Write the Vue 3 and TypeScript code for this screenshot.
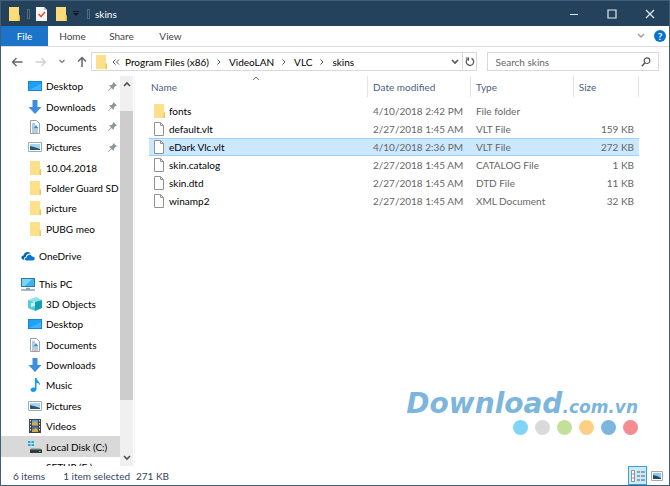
<script setup lang="ts">
import { ref } from 'vue'

interface NavItem {
  label: string
  icon: string
  root?: boolean
  pinned?: boolean
  active?: boolean
  gap?: boolean
}

interface FileRow {
  name: string
  date: string
  type: string
  size: string
  folder?: boolean
}

const navItems: NavItem[] = [
  { label: 'Desktop', icon: 'desktop', pinned: true },
  { label: 'Downloads', icon: 'download', pinned: true },
  { label: 'Documents', icon: 'document', pinned: true },
  { label: 'Pictures', icon: 'picture', pinned: true },
  { label: '10.04.2018', icon: 'folder' },
  { label: 'Folder Guard SD', icon: 'folder' },
  { label: 'picture', icon: 'folder' },
  { label: 'PUBG meo', icon: 'folder' },
  { label: 'OneDrive', icon: 'cloud', root: true, gap: true },
  { label: 'This PC', icon: 'pc', root: true, gap: true },
  { label: '3D Objects', icon: 'cube' },
  { label: 'Desktop', icon: 'desktop' },
  { label: 'Documents', icon: 'document' },
  { label: 'Downloads', icon: 'download' },
  { label: 'Music', icon: 'music' },
  { label: 'Pictures', icon: 'picture' },
  { label: 'Videos', icon: 'video' },
  { label: 'Local Disk (C:)', icon: 'disk', active: true },
  { label: 'SETUP (E:)', icon: 'none' },
]

const files: FileRow[] = [
  { name: 'fonts', date: '4/10/2018 2:42 PM', type: 'File folder', size: '', folder: true },
  { name: 'default.vlt', date: '2/27/2018 1:45 AM', type: 'VLT File', size: '159 KB' },
  { name: 'eDark Vlc.vlt', date: '4/10/2018 2:36 PM', type: 'VLT File', size: '272 KB' },
  { name: 'skin.catalog', date: '2/27/2018 1:45 AM', type: 'CATALOG File', size: '1 KB' },
  { name: 'skin.dtd', date: '2/27/2018 1:45 AM', type: 'DTD File', size: '11 KB' },
  { name: 'winamp2', date: '2/27/2018 1:45 AM', type: 'XML Document', size: '32 KB' },
]

const crumbs = ['Program Files (x86)', 'VideoLAN', 'VLC', 'skins']
const selected = ref('eDark Vlc.vlt')
const search = ref('')
</script>

<template>
  <div class="window">
    <header class="titlebar">
      <svg class="ic" viewBox="0 0 14 14"><path d="M1 0h10v9l1 1v4H1z" fill="#fbdc79" /><path d="M10.500 9l1.500-1v6h-1.500z" fill="#e8b93c" /></svg>
      <span class="bar"></span>
      <svg class="ic" viewBox="0 0 14 14"><path d="M1 0h8l3 3v11H1z" fill="#f6f6f8" /><path d="M9 0v3h3z" fill="#bcc4cc" /><path d="M3.500 7l2.500 2.500L10 5" fill="none" stroke="#e0532c" stroke-width="1.600" /></svg>
      <svg class="ic" viewBox="0 0 14 14"><path d="M1 0h10v9l1 1v4H1z" fill="#fbdc79" /><path d="M10.500 9l1.500-1v6h-1.500z" fill="#e8b93c" /></svg>
      <button class="plain more" aria-label="Customize toolbar">
        <svg width="6" height="6" viewBox="0 0 6 6"><path d="M0 .5h6" stroke="#0c1620" /><path d="M0 2h6L3 5z" fill="#0c1620" /></svg>
      </button>
      <span class="bar"></span>
      <h1 class="title">skins</h1>
      <div class="controls">
        <button class="plain ctl" aria-label="Minimize"><svg width="10" height="10" viewBox="0 0 10 10"><path d="M1 5.500h8" stroke="#e4eaf0" /></svg></button>
        <button class="plain ctl" aria-label="Maximize"><svg width="10" height="10" viewBox="0 0 10 10"><path d="M1 1h8v8H1z" fill="none" stroke="#e4eaf0" stroke-width="1.200" /></svg></button>
        <button class="plain ctl" aria-label="Close"><svg width="10" height="10" viewBox="0 0 10 10"><path d="M1 1l8 8M9 1L1 9" stroke="#e4eaf0" stroke-width="1.200" /></svg></button>
      </div>
    </header>

    <nav class="ribbon" aria-label="Ribbon">
      <button class="plain tab file">File</button>
      <button class="plain tab">Home</button>
      <button class="plain tab">Share</button>
      <button class="plain tab">View</button>
      <div class="ribbon-end">
        <button class="plain" aria-label="Expand ribbon"><svg width="8" height="6" viewBox="0 0 8 6"><path d="M1 1l3 3 3-3" fill="none" stroke="#9a9a9a" stroke-width="1.300" /></svg></button>
        <button class="plain help" aria-label="Help">?</button>
      </div>
    </nav>

    <div class="address-row">
      <div class="arrows">
        <button class="plain" aria-label="Back"><svg width="12" height="10" viewBox="0 0 12 10"><path d="M11.500 5H1.500M5.500 1l-4 4 4 4" fill="none" stroke="#666" stroke-width="1.400" /></svg></button>
        <button class="plain" aria-label="Forward"><svg width="12" height="10" viewBox="0 0 12 10"><path d="M.5 5h10M6.500 1l4 4-4 4" fill="none" stroke="#d0d0d0" stroke-width="1.300" /></svg></button>
        <button class="plain" aria-label="Recent locations"><svg width="6" height="5" viewBox="0 0 6 5"><path d="M.5 1L3 3.500 5.500 1" fill="none" stroke="#777" stroke-width="1.200" /></svg></button>
        <button class="plain" aria-label="Up"><svg width="10" height="12" viewBox="0 0 10 12"><path d="M5 11V1.500M1 5.500l4-4 4 4" fill="none" stroke="#666" stroke-width="1.500" /></svg></button>
      </div>
      <div class="address">
        <svg class="ic" viewBox="0 0 14 14"><path d="M1 0h10v9l1 1v4H1z" fill="#fce08a" /><path d="M10.500 9l1.500-1v6h-1.500z" fill="#efc750" /></svg>
        <svg class="chev" width="8" height="6" viewBox="0 0 8 6"><path d="M3.500.5L1 3l2.500 2.500M7 .5L4.500 3 7 5.500" fill="none" stroke="#555" /></svg>
        <template v-for="(crumb, i) in crumbs" :key="crumb">
          <svg v-if="i > 0" class="sep" width="4" height="6" viewBox="0 0 4 6"><path d="M.5.5L3 3 .5 5.500" fill="none" stroke="#555" /></svg>
          <a href="#" class="crumb">{{ crumb }}</a>
        </template>
        <button class="plain drop" aria-label="Previous locations"><svg width="8" height="6" viewBox="0 0 8 6"><path d="M1 1l3 3 3-3" fill="none" stroke="#555" stroke-width="1.600" /></svg></button>
        <button class="plain reload" aria-label="Refresh"><svg width="10" height="11" viewBox="0 0 10 11"><path d="M6.500 2.400A3.700 3.700 0 1 1 2.500 3" fill="none" stroke="#555" stroke-width="1.300" /><path d="M.8 2h2.700v2.800" fill="none" stroke="#555" stroke-width="1.200" /></svg></button>
      </div>
      <label class="search">
        <input v-model="search" type="text" placeholder="Search skins" aria-label="Search skins" />
        <svg width="10" height="10" viewBox="0 0 10 10"><circle cx="6" cy="3.700" r="2.800" fill="none" stroke="#555" stroke-width="1.200" /><path d="M4 5.800L.8 9.200" stroke="#555" stroke-width="1.500" /></svg>
      </label>
    </div>

    <div class="body">
      <aside class="side">
        <ul class="tree">
          <li v-for="(item, i) in navItems" :key="i" :class="{ root: item.root, active: item.active, gap: item.gap }">
            <a href="#">
              <svg class="ic" viewBox="0 0 14 14">
                <g v-if="item.icon === 'folder'"><path d="M2 0h10v9l1 1v4H2z" fill="#fce08a" /><path d="M11.500 9l1.500-1v6h-1.500z" fill="#efc750" /></g>
                <g v-else-if="item.icon === 'desktop'"><path d="M0 2h14v10H0z" fill="#1685d8" /><path d="M1 3h12v8H1z" fill="#1ea0f4" /><path d="M1 11l12-6v6z" fill="#40b4fb" /></g>
                <g v-else-if="item.icon === 'download'"><path d="M4.500 0h5v7H13.500L7 14 .5 7h4z" fill="#3c8fe0" /></g>
                <g v-else-if="item.icon === 'document'"><path d="M2.500.5h6l3 3v10h-9z" fill="#fbfcfd" stroke="#9aa3ab" /><path d="M4 6h3M4 4h3M4 10h6M4 12h6" stroke="#8795a2" /><path d="M6 8l2-3 2 3z" fill="#2497dc" /><path d="M4 8h6" stroke="#2497dc" /></g>
                <g v-else-if="item.icon === 'picture'"><path d="M.5 2.500h13v9H.5z" fill="#fff" stroke="#a3abb2" /><path d="M2 4h10v6H2z" fill="#a5d4f2" /><path d="M2 6l4 1 6 2v1H2z" fill="#28586b" /></g>
                <g v-else-if="item.icon === 'cloud'"><path d="M1.500 10.500C-.5 9 .3 6.500 2.500 6.400 3 3 7.500 1.800 9.800 4.600 6.500 4 4.800 6.300 5 7.800 3 8 2.800 9.500 3.500 10.800z" fill="#0a64b8" /><path d="M5 11.500C3.200 10.800 3.600 8.500 5.700 8.500 6 5.300 10 4.600 11 7.500c2-.2 3 1 2.600 2.600-.3 1-.8 1.400-1.800 1.400z" fill="#0a74d1" /></g>
                <g v-else-if="item.icon === 'pc'"><path d="M0 1h14v9H0z" fill="#2b79a8" /><path d="M1 2h12v7H1z" fill="#3db4ef" /><path d="M1 2h10L4 9H1z" fill="#7cd3fa" /><path d="M0 13h14M5 11.500h4" stroke="#8fa4b3" stroke-width="1.500" /></g>
                <g v-else-if="item.icon === 'cube'"><path d="M0 3l8-3 6 3-6 2z" fill="#8ce3ec" /><path d="M0 3l7 2v9l-7-3z" fill="#53cbd8" /><path d="M7 5l7-2v8l-7 3z" fill="#169eb3" /><path d="M3 6l4-1v4l-4 1z" fill="#c5f5f8" /></g>
                <g v-else-if="item.icon === 'music'"><path d="M7 0h1.500c.3 3 4 3.500 3.500 7.500-.8-2-2-2.500-3.500-2.700V11c0 3.600-6 3.800-6 .8 0-2 2.500-3 4.500-2z" fill="#149bf0" /></g>
                <g v-else-if="item.icon === 'video'"><path d="M1 0h12v14H1z" fill="#3e4348" /><path d="M4 1h6v5.500H4z" fill="#5aa0dc" /><path d="M4 7.500h6V13H4z" fill="#4179b4" /><path d="M4 4l3-2 3 3v1.500H4zM4 11l4-2 2 2v2H4z" fill="#d8a940" /><path d="M2.500 1v12M11.500 1v12" stroke="#dfe4e8" stroke-dasharray="1.500 1.500" /></g>
                <g v-else-if="item.icon === 'disk'"><path d="M0 1h2.500v2H0zM3.500 1H6v2H3.500zM0 4h2.500v2H0zM3.500 4H6v2H3.500z" fill="#17afe9" /><path d="M3 8h9l2 2H2z" fill="#a8adb1" /><path d="M2 9.500h12V13H2z" fill="#333a3e" /><path d="M11 11.500h1.500" stroke="#47db63" /></g>
              </svg>
              <span class="label">{{ item.label }}</span>
              <svg v-if="item.pinned" class="pin" width="9" height="9" viewBox="0 0 9 9"><path d="M5.500 0L9 3.500 7.500 4 6 5.500 5.500 8 3.500 6 .5 9 0 8.500l3-3-2-2L3.500 3 5 1.500z" fill="#8a979f" /></svg>
            </a>
          </li>
        </ul>
      </aside>
      <div class="scroll" aria-hidden="true">
        <svg class="cap" width="8" height="6" viewBox="0 0 8 6"><path d="M1 5l3-3 3 3" fill="none" stroke="#505050" stroke-width="1.600" /></svg>
        <span class="thumb"></span>
        <svg class="cap" width="8" height="6" viewBox="0 0 8 6"><path d="M1 1l3 3 3-3" fill="none" stroke="#505050" stroke-width="1.600" /></svg>
      </div>

      <main class="content">
        <table class="files">
          <colgroup><col class="c-name" /><col class="c-date" /><col class="c-type" /><col class="c-size" /></colgroup>
          <thead>
            <tr>
              <th scope="col">Name<svg class="sort" width="8" height="5" viewBox="0 0 8 5"><path d="M1 4l3-3 3 3" fill="none" stroke="#777" /></svg></th>
              <th scope="col">Date modified</th>
              <th scope="col">Type</th>
              <th scope="col">Size</th>
            </tr>
          </thead>
          <tbody>
            <tr v-for="file in files" :key="file.name" :class="{ selected: file.name === selected }" @click="selected = file.name">
              <td class="name">
                <div class="cell">
                  <svg class="ic" viewBox="0 0 14 14">
                    <g v-if="file.folder"><path d="M1 0h10v9l1 1v4H1z" fill="#fce08a" /><path d="M10.500 9l1.500-1v6h-1.500z" fill="#efc750" /></g>
                    <path v-else d="M1.500.5h6l3 3v10h-9zM7.500.5v3h3" fill="#fff" stroke="#929292" />
                  </svg>
                  <span>{{ file.name }}</span>
                </div>
              </td>
              <td>{{ file.date }}</td>
              <td>{{ file.type }}</td>
              <td class="size">{{ file.size }}</td>
            </tr>
          </tbody>
        </table>
        <div class="mark">
          <p class="brand">Download<span>.com.vn</span></p>
          <div class="dots"><i class="d1"></i><i class="d2"></i><i class="d3"></i><i class="d4"></i><i class="d5"></i><i class="d6"></i></div>
        </div>
      </main>
    </div>

    <footer class="status">
      <span>6 items</span>
      <span class="sel">1 item selected</span>
      <span>271 KB</span>
      <div class="views">
        <button class="plain view on" aria-label="Details view"><svg width="14" height="12" viewBox="0 0 14 12"><path d="M.5.5h3v11h-3zM.5 4h3M.5 8h3" fill="#fff" stroke="#9a8f93" /><path d="M6 2h3M10 2h4M6 6h3M10 6h4M6 10h3M10 10h4" stroke="#455c6a" /></svg></button>
        <button class="plain view" aria-label="Thumbnail view"><svg width="12" height="10" viewBox="0 0 12 10"><path d="M.5.5h11v9H.5z" fill="#fff" stroke="#a8a8a8" /><path d="M2 2h8v6H2z" fill="#8cc9f0" /><path d="M2 4l4 1 4 2v1H2z" fill="#1f4d63" /></svg></button>
      </div>
    </footer>
  </div>
</template>

<style>
body {
  margin: 0;
}
</style>

<style scoped>
.window {
  display: flex;
  flex-direction: column;
  height: 100vh;
  box-sizing: border-box;
  border: 1px solid #3d5f7a;
  background: #fff;
  color: #000;
  font-family: Lato, "Open Sans", sans-serif;
  font-size: 10px;
  line-height: 14px;
  overflow: hidden;
}
svg {
  display: block;
  flex: none;
}
a {
  color: inherit;
  text-decoration: none;
}
.plain {
  display: flex;
  align-items: center;
  justify-content: center;
  padding: 0;
  border: 0;
  background: none;
  color: inherit;
  font: inherit;
}
.ic {
  width: 14px;
  height: 14px;
}
.titlebar {
  display: flex;
  align-items: center;
  flex: none;
  height: 25px;
  padding-left: 7px;
  background: #24425c;
  color: #fff;
}
.bar {
  width: 1px;
  height: 8px;
  margin: 0 5px 0 5px;
  border: 1px solid #506a80;
}
.titlebar .ic + .ic {
  margin-left: 6px;
}
.more {
  width: 12px;
  height: 14px;
  margin-left: 1px;
}
.title {
  margin: 0;
  font-size: 10px;
  font-weight: 400;
}
.controls {
  display: flex;
  margin-left: auto;
}
.ctl {
  width: 38px;
  height: 25px;
}
.ribbon {
  display: flex;
  flex: none;
  height: 20px;
  border-bottom: 1px solid #dcdcdc;
  color: #444;
}
.tab {
  width: 49px;
}
.tab.file {
  width: 47px;
  background: #1b74c8;
  color: #fff;
}
.ribbon-end {
  display: flex;
  align-items: center;
  gap: 9px;
  margin-left: auto;
  padding-right: 3px;
}
.help {
  width: 12px;
  height: 12px;
  border-radius: 50%;
  background: #0b72d0;
  color: #fff;
  font-weight: 700;
}
.address-row {
  display: flex;
  align-items: center;
  flex: none;
  height: 29px;
  padding: 0 10px;
}
.arrows {
  display: flex;
  align-items: center;
  gap: 12px;
  width: 80px;
}
.address {
  display: flex;
  align-items: center;
  flex: 1;
  height: 17px;
  padding-left: 3px;
  border: 1px solid #d9d9d9;
}
.chev {
  margin: 0 5px 0 3px;
}
.sep {
  margin: 0 8px;
}
.drop {
  width: 14px;
  height: 17px;
  margin-left: auto;
}
.reload {
  width: 14px;
  height: 17px;
  border-left: 1px solid #d9d9d9;
}
.search {
  display: flex;
  align-items: center;
  width: 24%;
  height: 17px;
  box-sizing: content-box;
  margin-left: 10px;
  padding: 0 7px;
  border: 1px solid #d9d9d9;
}
.search input {
  flex: 1;
  min-width: 0;
  padding: 0;
  border: 0;
  outline: 0;
  background: none;
  font: inherit;
}
.search input::placeholder {
  color: #666;
  opacity: 1;
}
.body {
  display: flex;
  flex: 1;
  min-height: 0;
}
.side {
  width: 119px;
  overflow: hidden;
}
.tree {
  display: flex;
  flex-direction: column;
  height: calc(100% + 11px);
  margin: 0;
  padding: 0;
  list-style: none;
}
.tree li {
  display: flex;
  flex: 1;
  padding-left: 27px;
}
.tree li.root {
  padding-left: 20px;
}
.tree li.gap {
  margin-top: 7px;
}
.tree li.active {
  background: #d9d9d9;
}
.tree a {
  display: flex;
  align-items: center;
  gap: 4px;
  flex: 1;
  white-space: nowrap;
}
.pin {
  margin-left: auto;
  margin-right: 3px;
}
.scroll {
  display: flex;
  flex-direction: column;
  align-items: center;
  justify-content: space-between;
  width: 13px;
  padding: 5px 0;
  background: #f0f0f0;
}
.thumb {
  width: 100%;
  height: 76%;
  margin: 24px 0 auto;
  background: #cdcdcd;
}
.content {
  position: relative;
  flex: 1;
  min-width: 0;
  padding: 0 30px 0 14px;
  margin-left: 1px;
  border-left: 1px solid #f4f4f4;
}
.files {
  width: 100%;
  table-layout: fixed;
  border-collapse: separate;
  border-spacing: 0;
  color: #666;
}
.c-name {
  width: 219px;
}
.c-date {
  width: 21%;
}
.c-type {
  width: 21%;
}
.files th {
  height: 21px;
  padding: 0 0 0 5px;
  border-right: 1px solid #e5e5e5;
  color: #4c607a;
  font-weight: 400;
  text-align: left;
}
.files th:first-child {
  position: relative;
  padding-left: 2px;
}
.sort {
  position: absolute;
  top: 0;
  right: 49%;
}
.files thead::after {
  content: "";
  display: block;
  height: 5px;
}
.files td {
  height: 16px;
  padding: 0 0 0 5px;
  border: solid transparent;
  border-width: 1px 0;
  white-space: nowrap;
}
.files td.name {
  padding-left: 4px;
  color: #000;
}
.files td.size {
  padding-right: 5px;
  text-align: right;
}
.cell {
  display: flex;
  align-items: center;
  gap: 2px;
}
.files .selected td {
  border-color: #99d1ff;
  background: #cce8ff;
}
.mark {
  position: absolute;
  right: 31px;
  bottom: 31px;
  color: #7cb6dd;
}
.brand {
  margin: 0;
  font: italic 700 28px/26px "DejaVu Sans", sans-serif;
}
.brand span {
  font-size: 17px;
}
.dots {
  display: flex;
  justify-content: flex-end;
  gap: 7px;
}
.dots i {
  width: 15px;
  height: 15px;
  border-radius: 50%;
}
.d1 { background: #7fd4f7; }
.d2 { background: #dadada; }
.d3 { background: #c3e09b; }
.d4 { background: #fccf85; }
.d5 { background: #7cb6dd; }
.d6 { background: #f58c90; }
.status {
  display: flex;
  align-items: center;
  flex: none;
  height: 19px;
  padding: 0 3px 0 12px;
  color: #32445f;
}
.sel {
  margin: 0 6px 0 18px;
}
.views {
  display: flex;
  margin-left: auto;
}
.view {
  width: 19px;
  height: 19px;
}
.view.on {
  box-sizing: border-box;
  border: 1px solid #2ea6dc;
  background: #cdeafa;
}
</style>
